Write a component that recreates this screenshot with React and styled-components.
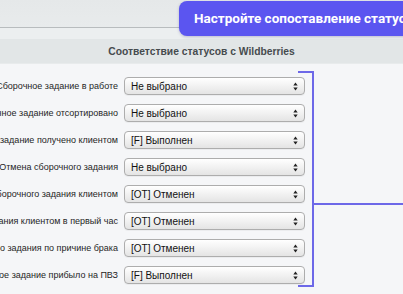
import React from "react";
import styled, { createGlobalStyle } from "styled-components";

const GlobalStyle = createGlobalStyle`
  html, body { margin: 0; padding: 0; }
  body {
    background: #f5f6f8;
    font-family: "Liberation Sans", Arial, sans-serif;
    width: 403px;
    height: 294px;
    overflow: hidden;
  }
`;

const Page = styled.div`
  position: relative;
  width: 403px;
  height: 294px;
  overflow: hidden;
  background: #f5f6f8;
`;

const TopBar = styled.div`
  height: 27px;
  background: linear-gradient(#e5e8e9, #e8ebec);
  border-bottom: 1px solid #b8bcbe;
`;

const Band = styled.div`
  height: 11px;
  background: #eceff0;
`;

const HeaderBar = styled.div`
  height: 24px;
  background: #e2e6e7;
  border-bottom: 1px solid #e8ebec;
  display: flex;
  align-items: center;
  justify-content: center;
  font-size: 10.3px;
  font-weight: bold;
  color: #464b4e;
`;

const Rows = styled.div`
  display: flex;
  flex-direction: column;
  gap: 9px;
  padding-top: 13px;
`;

const Row = styled.div`
  display: grid;
  grid-template-columns: 118px 181px;
  column-gap: 6px;
  align-items: center;
  height: 18px;
`;

const Label = styled.div`
  display: flex;
  justify-content: flex-end;
  white-space: nowrap;
  font-size: 9px;
  color: #1f1f1f;
`;

const Select = styled.div`
  box-sizing: border-box;
  height: 18px;
  display: flex;
  align-items: center;
  justify-content: space-between;
  padding: 0 6px 0 6px;
  border: 1px solid #adadad;
  border-radius: 4px;
  background: linear-gradient(#ffffff 0%, #f3f3f3 45%, #e4e4e4 100%);
  box-shadow: 0 1px 0 rgba(0, 0, 0, 0.04);
  font-size: 10px;
  color: #111;
`;

const Arrows = styled.svg`
  width: 5px;
  height: 9px;
  flex: none;
`;

const Banner = styled.div`
  position: absolute;
  left: 179px;
  top: 1px;
  width: 280px;
  height: 35px;
  box-sizing: border-box;
  border-radius: 8px;
  background: #5b55f0;
  box-shadow: 0 1px 3px rgba(40, 30, 120, 0.25);
  display: flex;
  align-items: center;
  padding-left: 15px;
  padding-bottom: 1px;
  font-family: Roboto, "Liberation Sans", sans-serif;
  font-weight: 700;
  font-size: 13.5px;
  color: #ffffff;
  white-space: nowrap;
`;

const Bracket = styled.svg`
  position: absolute;
  left: 296px;
  top: 70px;
  width: 107px;
  height: 220px;
  pointer-events: none;
`;

const rows = [
  ["Сборочное задание в работе", "Не выбрано"],
  ["Сборочное задание отсортировано", "Не выбрано"],
  ["Сборочное задание получено клиентом", "[F] Выполнен"],
  ["Отмена сборочного задания", "Не выбрано"],
  ["Отмена сборочного задания клиентом", "[OT] Отменен"],
  ["Отмена сборочного задания клиентом в первый час", "[OT] Отменен"],
  ["Отмена сборочного задания по причине брака", "[OT] Отменен"],
  ["Сборочное задание прибыло на ПВЗ", "[F] Выполнен"],
];

const UpDown = () => (
  <Arrows viewBox="0 0 5 9">
    <path d="M2.5 0.5 L4.7 3.6 L0.3 3.6 Z" fill="#222" />
    <path d="M2.5 8.5 L4.7 5.4 L0.3 5.4 Z" fill="#222" />
  </Arrows>
);

export default function App() {
  return (
    <Page>
      <GlobalStyle />
      <TopBar />
      <Band />
      <HeaderBar>Соответствие статусов с Wildberries</HeaderBar>
      <Rows>
        {rows.map(([label, value], i) => (
          <Row key={i}>
            <Label>{label}</Label>
            <Select>
              <span>{value}</span>
              <UpDown />
            </Select>
          </Row>
        ))}
      </Rows>
      <Bracket viewBox="0 0 107 220">
        <path
          d="M2 2 H17 V216 H2 M17 134 H107"
          fill="none"
          stroke="#6d68e8"
          strokeWidth="2"
        />
      </Bracket>
      <Banner>Настройте сопоставление статусов</Banner>
    </Page>
  );
}
